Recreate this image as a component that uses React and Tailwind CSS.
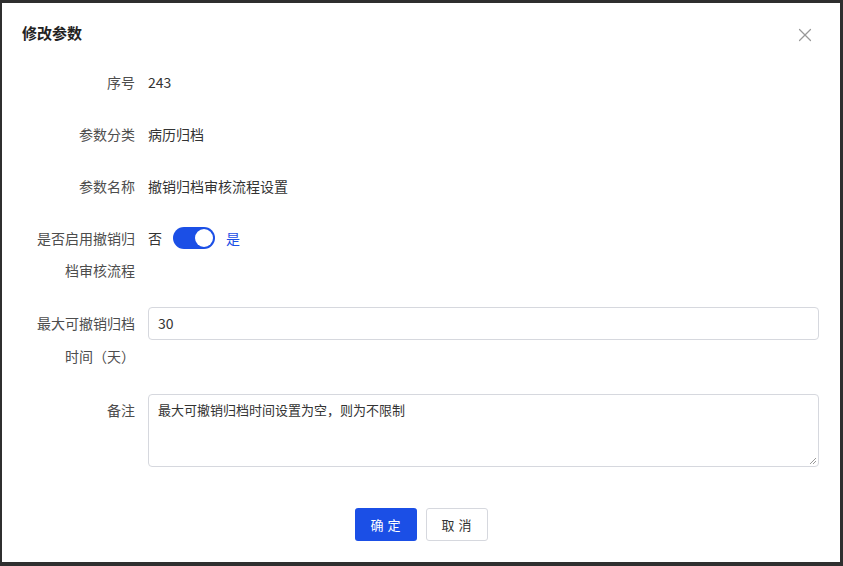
import React from 'react';
import { X } from 'lucide-react';

const font = { fontFamily: '"Noto Sans CJK SC", "Noto Sans", sans-serif' };

const Row = ({ label, children, mb = 'mb-[20px]', leading = 'leading-[32px]' }) => (
  <div className={`flex items-start ${mb}`}>
    <div className={`w-[104px] shrink-0 text-right text-[14px] ${leading} text-[#4d4d4d]`}>{label}</div>
    <div className={`flex-1 ml-[13px] text-[14px] ${leading}`}>{children}</div>
  </div>
);

export default function App() {
  return (
    <div className="w-[843px] h-[566px] bg-[#2f2f2f] pt-[3px] pl-[2px] text-[#333]" style={font}>
      <div className="w-[838px] h-[559px] bg-white flex flex-col">
        {/* header */}
        <div className="flex items-center justify-between pl-[20px] pr-[24px] pt-[17px]">
          <div className="text-[15px] font-bold text-[#222] leading-[18px]">修改参数</div>
          <X size={22} strokeWidth={1.3} className="text-[#999] mt-[4px]" />
        </div>

        {/* form */}
        <div className="pl-[29px] pr-[21px] pt-[20px]">
          <Row label="序号">243</Row>
          <Row label="参数分类">病历归档</Row>
          <Row label="参数名称">撤销归档审核流程设置</Row>
          <Row label="是否启用撤销归档审核流程" mb="mb-[21px]">
            <div className="flex items-center h-[32px] gap-[11px] text-[#1b4fe6]">
              <span className="text-[#333]">否</span>
              <div className="w-[42px] h-[22px] rounded-full bg-[#1b4fe6] relative">
                <div className="absolute right-[2px] top-[2px] w-[18px] h-[18px] rounded-full bg-white" />
              </div>
              <span>是</span>
            </div>
          </Row>
          <Row label="最大可撤销归档时间（天）" mb="mb-[21px]" leading="leading-[33px]">
            <div className="h-[33px] border border-[#d6d8de] rounded-[4px] px-[9px] flex items-center">30</div>
          </Row>
          <Row label="备注" mb="">
            <div className="relative h-[73px] border border-[#d6d8de] rounded-[4px] px-[9px] py-[4px] leading-[22px] text-[13px]">
              最大可撤销归档时间设置为空，则为不限制
              <svg className="absolute right-[1px] bottom-[1px]" width="9" height="9" viewBox="0 0 9 9">
                <path d="M8 2 L2 8 M8 5 L5 8" stroke="#999" strokeWidth="1" />
              </svg>
            </div>
          </Row>
        </div>

        {/* footer */}
        <div className="flex justify-center gap-[9px] mt-[41px]">
          <button className="w-[62px] h-[33px] rounded-[3px] bg-[#1b4fe6] text-white text-[13px] tracking-[4px] pl-[4px]">确定</button>
          <button className="w-[62px] h-[33px] rounded-[3px] bg-white border border-[#d6d8de] text-[13px] tracking-[4px] pl-[4px]">取消</button>
        </div>
      </div>
    </div>
  );
}
